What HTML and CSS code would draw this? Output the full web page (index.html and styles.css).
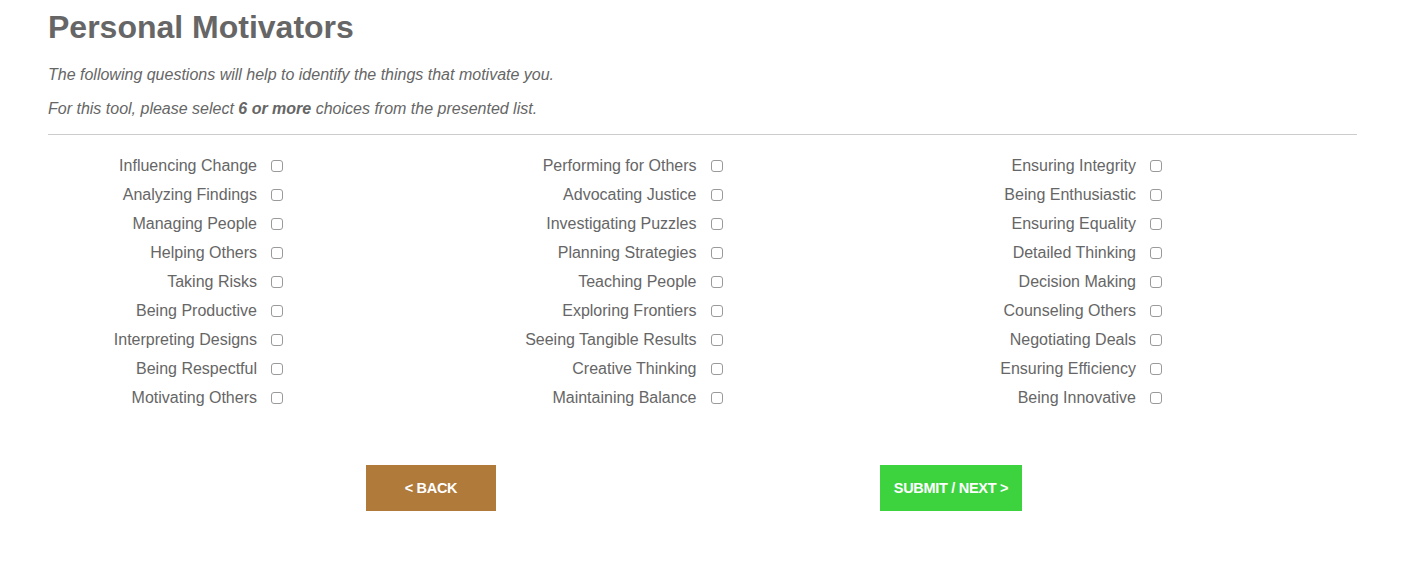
FILE: index.html
```html
<!DOCTYPE html>
<html lang="en">
<head>
  <meta charset="UTF-8">
  <title>Personal Motivators</title>
  <link rel="stylesheet" href="styles.css">
</head>
<body>
  <div class="page">
    <h1>Personal Motivators</h1>
    <p class="intro">The following questions will help to identify the things that motivate you.</p>
    <p class="intro second">For this tool, please select <b>6 or more</b> choices from the presented list.</p>
    <hr>

    <!-- Motivator choices -->
    <form class="choices" id="choices">
      <div class="column">
        <label class="choice"><span>Influencing Change</span><input type="checkbox"></label>
        <label class="choice"><span>Analyzing Findings</span><input type="checkbox"></label>
        <label class="choice"><span>Managing People</span><input type="checkbox"></label>
        <label class="choice"><span>Helping Others</span><input type="checkbox"></label>
        <label class="choice"><span>Taking Risks</span><input type="checkbox"></label>
        <label class="choice"><span>Being Productive</span><input type="checkbox"></label>
        <label class="choice"><span>Interpreting Designs</span><input type="checkbox"></label>
        <label class="choice"><span>Being Respectful</span><input type="checkbox"></label>
        <label class="choice"><span>Motivating Others</span><input type="checkbox"></label>
      </div>
      <div class="column">
        <label class="choice"><span>Performing for Others</span><input type="checkbox"></label>
        <label class="choice"><span>Advocating Justice</span><input type="checkbox"></label>
        <label class="choice"><span>Investigating Puzzles</span><input type="checkbox"></label>
        <label class="choice"><span>Planning Strategies</span><input type="checkbox"></label>
        <label class="choice"><span>Teaching People</span><input type="checkbox"></label>
        <label class="choice"><span>Exploring Frontiers</span><input type="checkbox"></label>
        <label class="choice"><span>Seeing Tangible Results</span><input type="checkbox"></label>
        <label class="choice"><span>Creative Thinking</span><input type="checkbox"></label>
        <label class="choice"><span>Maintaining Balance</span><input type="checkbox"></label>
      </div>
      <div class="column">
        <label class="choice"><span>Ensuring Integrity</span><input type="checkbox"></label>
        <label class="choice"><span>Being Enthusiastic</span><input type="checkbox"></label>
        <label class="choice"><span>Ensuring Equality</span><input type="checkbox"></label>
        <label class="choice"><span>Detailed Thinking</span><input type="checkbox"></label>
        <label class="choice"><span>Decision Making</span><input type="checkbox"></label>
        <label class="choice"><span>Counseling Others</span><input type="checkbox"></label>
        <label class="choice"><span>Negotiating Deals</span><input type="checkbox"></label>
        <label class="choice"><span>Ensuring Efficiency</span><input type="checkbox"></label>
        <label class="choice"><span>Being Innovative</span><input type="checkbox"></label>
      </div>
    </form>

    <div class="actions">
      <button type="button" class="btn back">&lt; BACK</button>
      <button type="button" class="btn next">SUBMIT / NEXT &gt;</button>
    </div>
  </div>
</body>
</html>
```

FILE: styles.css
```css
/* General styles */
body {
  margin: 0;
  font-family: "Liberation Sans", Arial, sans-serif;
  background-color: #fff;
  color: #666;
}

.page {
  padding: 0 48px;
}

h1 {
  margin: 9px 0 0;
  font-size: 32px;
  line-height: 36px;
  font-weight: bold;
  color: #666;
}

.intro {
  margin: 20px 0 0;
  font-size: 16px;
  line-height: 20px;
  font-style: italic;
  color: #666;
}

.intro.second {
  margin-top: 14px;
}

hr {
  margin: 15px 0 0;
  border: none;
  border-top: 1px solid #ccc;
}

/* Choices grid */
.choices {
  display: grid;
  grid-template-columns: repeat(3, 439.5px);
  padding-top: 16px;
}

.choice {
  display: flex;
  align-items: center;
  height: 29px;
  font-size: 16px;
  color: #666;
}

.choice span {
  width: 209px;
  text-align: right;
}

.choice input {
  appearance: none;
  -webkit-appearance: none;
  width: 12px;
  height: 12px;
  margin: 0 0 0 14px;
  border: 1px solid #9a9a9a;
  border-radius: 3px;
  background-color: #fff;
  cursor: pointer;
}

.choice input:checked {
  background-color: #3cd13c;
  border-color: #3cd13c;
}

/* Buttons */
.actions {
  display: flex;
  padding: 53px 0 0 318px;
}

.btn {
  height: 46px;
  border: none;
  color: #fff;
  font-family: "Liberation Sans", Arial, sans-serif;
  font-size: 14.5px;
  font-weight: bold;
  letter-spacing: -0.3px;
  cursor: pointer;
}

.btn.back {
  width: 130px;
  background-color: #b07a3b;
}

.btn.next {
  width: 142px;
  margin-left: 384px;
  background-color: #3dd33f;
}
```
